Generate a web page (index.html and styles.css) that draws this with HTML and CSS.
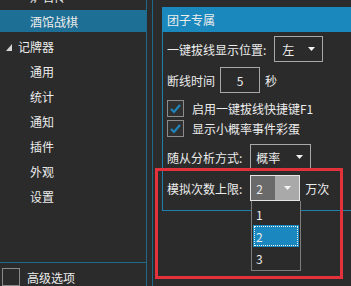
FILE: index.html
```html
<!DOCTYPE html>
<html lang="zh-CN">
<head>
<meta charset="utf-8">
<link rel="stylesheet" href="styles.css">
</head>
<body>
<div class="app">
  <aside class="side">
    <div class="tree">
      <ul class="tree-list">
        <li class="item child">炉石传</li>
        <li class="item child selected">酒馆战棋</li>
        <li class="item parent"><svg class="tri" width="6" height="7" viewBox="0 0 6 7"><polygon points="6,0 6,7 0,7"/></svg><span>记牌器</span></li>
        <li class="item child">通用</li>
        <li class="item child">统计</li>
        <li class="item child">通知</li>
        <li class="item child">插件</li>
        <li class="item child">外观</li>
        <li class="item child">设置</li>
      </ul>
    </div>
    <div class="adv"><span class="adv-box"></span><span>高级选项</span></div>
  </aside>
  <main class="content">
    <section class="group">
      <div class="group-head">团子专属</div>
      <div class="group-body">
        <div class="row r1">
          <span>一键拔线显示位置:</span>
          <div class="combo c1"><span>左</span><svg class="arrow" width="7" height="4" viewBox="0 0 7 4"><polygon points="0,0 7,0 3.5,4"/></svg></div>
        </div>
        <div class="row r2">
          <span>断线时间</span>
          <div class="textbox">5</div>
          <span class="unit">秒</span>
        </div>
        <div class="check r3">
          <span class="cbox"><svg width="15" height="15" viewBox="0 0 15 15"><polyline points="3,8 6,11 12,4"/></svg></span>
          <span>启用一键拔线快捷键F1</span>
        </div>
        <div class="check r4">
          <span class="cbox"><svg width="15" height="15" viewBox="0 0 15 15"><polyline points="3,8 6,11 12,4"/></svg></span>
          <span>显示小概率事件彩蛋</span>
        </div>
        <div class="row r5">
          <span>随从分析方式:</span>
          <div class="combo c5"><span>概率</span><svg class="arrow" width="7" height="4" viewBox="0 0 7 4"><polygon points="0,0 7,0 3.5,4"/></svg></div>
        </div>
        <div class="row r6">
          <span>模拟次数上限:</span>
          <div class="combo c6 open">
            <span class="c6-val">2</span>
            <span class="c6-btn"><svg width="7" height="4" viewBox="0 0 7 4"><polygon points="0,0 7,0 3.5,4"/></svg></span>
          </div>
          <span class="unit">万次</span>
        </div>
      </div>
    </section>
  </main>
</div>
<ul class="popup">
  <li class="opt">1</li>
  <li class="opt sel">2</li>
  <li class="opt">3</li>
</ul>
<div class="annot"></div>
</body>
</html>
```

FILE: styles.css
```css
html, body {
  margin: 0;
  padding: 0;
}
body {
  width: 351px;
  height: 286px;
  overflow: hidden;
  background: #2b2b2b;
  color: #ececec;
  font-family: "Noto Sans CJK SC", "Noto Sans", sans-serif;
  font-size: 12px;
  position: relative;
}
ul { list-style: none; margin: 0; padding: 0; }

.app {
  display: flex;
  height: 286px;
}

/* left side */
.side {
  width: 147px;
  flex: none;
  box-sizing: border-box;
  border-right: 1px solid #1f6a8a;
  display: flex;
  flex-direction: column;
}
.tree {
  height: 267px;
  box-sizing: border-box;
  border-bottom: 1px solid #1f6a8a;
  overflow: hidden;
}
.tree-list {
  margin-top: -15px;
}
.item {
  height: 22px;
  margin-bottom: 3px;
  display: flex;
  align-items: center;
  white-space: nowrap;
}
.item.child { padding-left: 30px; }
.item.parent { padding-left: 6px; }
.item.selected { background: #1d6f95; }
.tri {
  fill: #d6d6d6;
  margin-right: 6px;
  margin-top: 2px;
}
.adv {
  display: flex;
  align-items: center;
  padding: 5px 0 0 2px;
  gap: 7px;
}
.adv-box {
  width: 18px;
  height: 18px;
  box-sizing: border-box;
  border: 1px solid #8a8a8a;
  flex: none;
}

/* content */
.content {
  flex: 1;
  margin-left: 5px;
  border-left: 1px solid #1f6a8a;
  padding: 7px 0 0 9px;
  min-width: 0;
}
.group {
  width: 260px;
}
.group-head {
  height: 25px;
  background: #1b88bd;
  display: flex;
  align-items: center;
  padding-left: 5px;
}
.group-body {
  border-left: 1px solid #1f80ae;
  border-bottom: 1px solid #1f80ae;
  padding: 0 0 9px 4px;
  display: flex;
  flex-direction: column;
}
.row {
  display: flex;
  align-items: center;
  height: 26px;
  white-space: nowrap;
}
.r1 { margin-top: 4px; }
.r2 { margin-top: 5px; }
.r3 { margin-top: 7px; }
.r4 { margin-top: 3px; }
.r5 { margin-top: 7px; }
.r6 { margin-top: 5px; }

.combo {
  height: 26px;
  box-sizing: border-box;
  border: 1px solid #a8a8a8;
  margin-left: 8px;
  display: flex;
  align-items: center;
  position: relative;
}
.arrow { fill: #f2f2f2; position: absolute; }
.c1 { width: 49px; padding-left: 7px; }
.c1 .arrow { left: 33px; top: 10px; }
.c5 { width: 61px; padding-left: 5px; }
.c5 .arrow { left: 45px; top: 10px; }
.c6 {
  width: 50px;
  border-color: #e6e6e6;
  padding: 0;
  align-items: stretch;
}
.c6-val {
  width: 24px;
  background: #6a6a6a;
  padding-left: 5px;
  display: flex;
  align-items: center;
  box-sizing: border-box;
}
.c6-btn {
  flex: 1;
  background: #a9a9a9;
  display: flex;
  align-items: center;
  justify-content: center;
}
.c6-btn svg { fill: #f4f4f4; }

.textbox {
  width: 40px;
  height: 26px;
  box-sizing: border-box;
  border: 1px solid #a8a8a8;
  margin-left: 5px;
  display: flex;
  align-items: center;
  justify-content: center;
}
.unit { margin-left: 5px; }

.check {
  display: flex;
  align-items: center;
  height: 17px;
  gap: 8px;
  white-space: nowrap;
}
.cbox {
  width: 17px;
  height: 17px;
  box-sizing: border-box;
  border: 1px solid #8c8c8c;
  background: #303030;
  display: flex;
  align-items: center;
  justify-content: center;
  flex: none;
}
.cbox polyline {
  fill: none;
  stroke: #1e86bb;
  stroke-width: 2.2;
}

/* dropdown popup (overlay) */
.popup {
  position: absolute;
  left: 251px;
  top: 201px;
  width: 50px;
  height: 70px;
  box-sizing: border-box;
  border: 1px solid #7e7e7e;
  border-top: none;
  background: #2b2b2b;
  padding-top: 2px;
}
.opt {
  height: 22px;
  display: flex;
  align-items: center;
  padding-left: 4px;
}
.opt.sel {
  background: #1b87bf;
  margin: 0 1px;
  padding-left: 3px;
  outline: 1px dotted #f0f0f0;
  outline-offset: -2px;
}

/* annotation */
.annot {
  position: absolute;
  left: 155px;
  top: 168px;
  width: 188px;
  height: 111px;
  box-sizing: border-box;
  border: 3px solid #e3323b;
}
```
